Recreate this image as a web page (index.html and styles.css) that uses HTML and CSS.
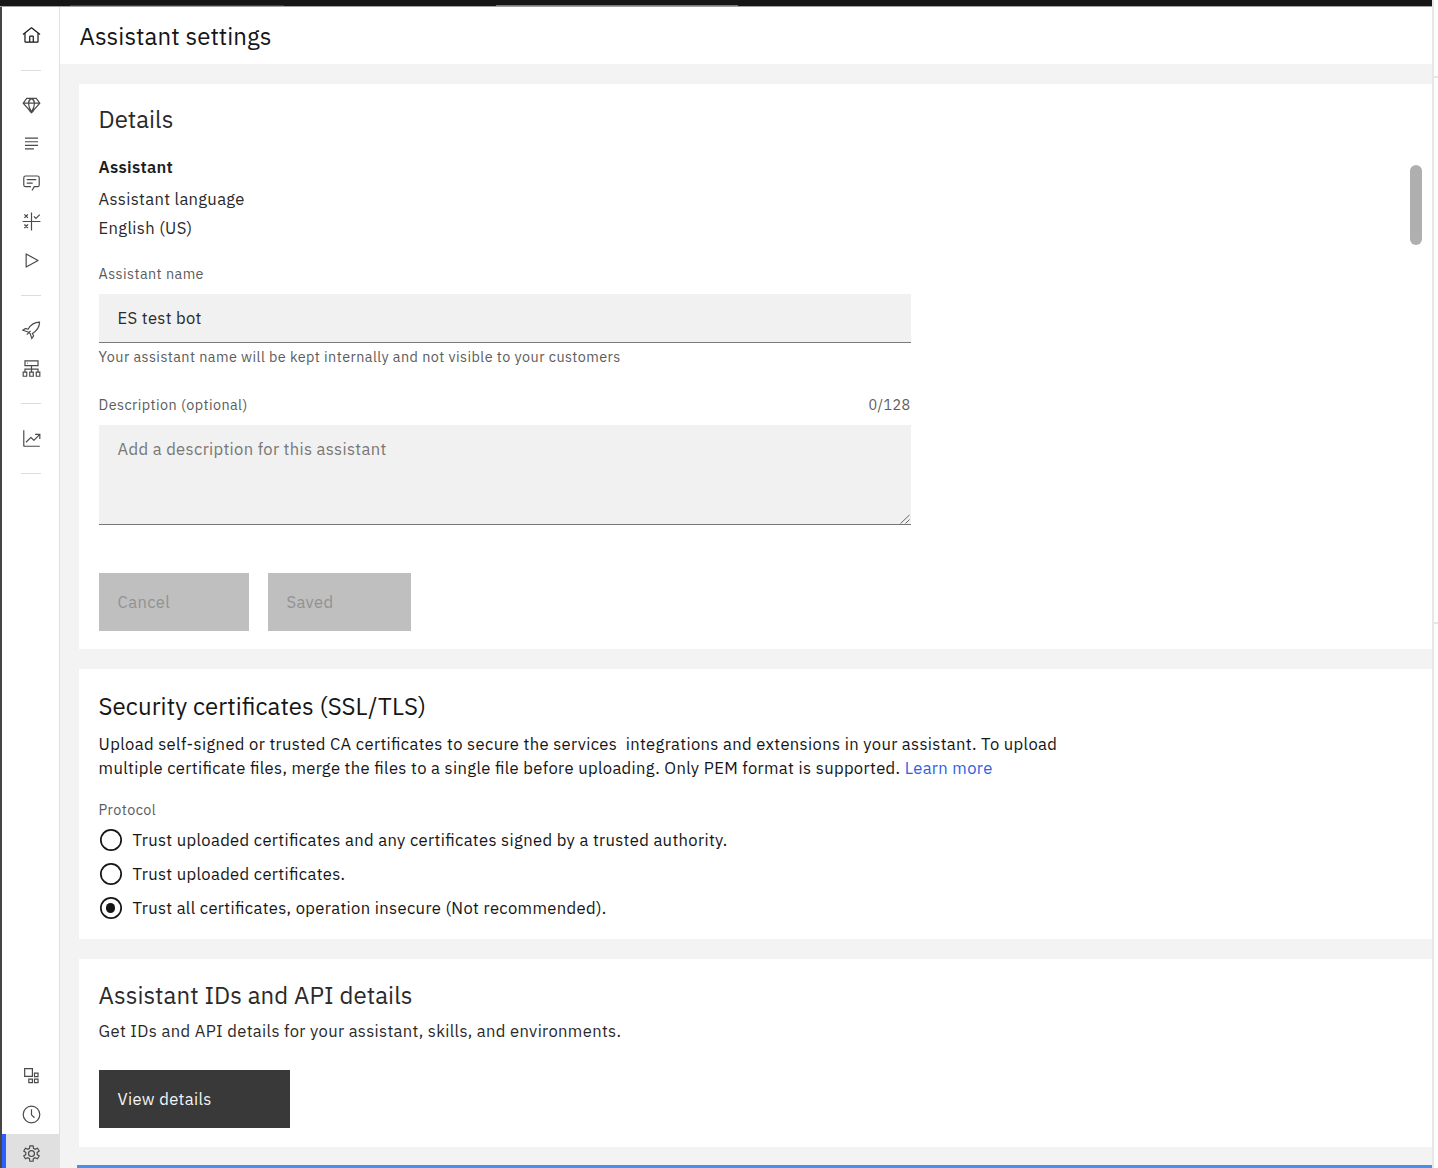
FILE: index.html
```html
<!DOCTYPE html>
<html lang="en">
<head>
<meta charset="utf-8">
<title>Assistant settings</title>
<link rel="stylesheet" href="styles.css">
</head>
<body>
<div class="window">
  <div class="topbar"><span class="tab tab-a"></span><span class="tab tab-b"></span></div>
  <div class="app">
    <nav class="sidebar">
      <a class="nav-item home"><svg viewBox="0 0 32 32"><path d="M16.6123,2.2138a1.01,1.01,0,0,0-1.2427,0L1,13.4194l1.2427,1.5717L4,13.6209V26a2.0041,2.0041,0,0,0,2,2H26a2.0037,2.0037,0,0,0,2-2V13.63L29.7573,15,31,13.4282ZM18,26H14V18h4Zm2,0V18a2.0023,2.0023,0,0,0-2-2H14a2.002,2.002,0,0,0-2,2v8H6V12.0615l10-7.79,10,7.8005V26Z"/></svg></a>
      <hr>
      <a class="nav-item"><svg class="line" viewBox="0 0 32 32"><path d="M8 4h16l6 8-14 16L2 12zM2 12h28M16 4c-4 2.500-5 5-5 8s2 10 5 15c3-5 5-12 5-15s-1-5.500-5-8"/><path d="M14 26h4l-2 2z"/></svg></a>
      <a class="nav-item"><svg viewBox="0 0 32 32"><path d="M5 6h22v2H5zM5 12h22v2H5zM5 18h22v2H5zM5 24h15v2H5z"/></svg></a>
      <a class="nav-item"><svg viewBox="0 0 32 32"><path d="M17.740 30L16 29l4-7h6a2 2 0 0 0 2-2V8a2 2 0 0 0-2-2H6a2 2 0 0 0-2 2v12a2 2 0 0 0 2 2h9v2H6a4 4 0 0 1-4-4V8a4 4 0 0 1 4-4h20a4 4 0 0 1 4 4v12a4 4 0 0 1-4 4h-4.840zM8 10h16v2H8zM8 16h10v2H8z"/></svg></a>
      <a class="nav-item"><svg class="line" viewBox="0 0 32 32"><path d="M16 1v30M1 16h30M4 4l6 6M10 4l-6 6M4 21l6 6M10 21l-6 6M20 7.500l3.500 3.500L30 4.500"/></svg></a>
      <a class="nav-item"><svg viewBox="0 0 32 32"><path d="M7,28a1,1,0,0,1-1-1V5a1,1,0,0,1,1.4819-.8763l20,11a1,1,0,0,1,0,1.7525l-20,11A1.0005,1.0005,0,0,1,7,28ZM8,6.6909V25.3088L24.9248,16Z"/></svg></a>
      <hr>
      <a class="nav-item"><svg class="line" viewBox="0 0 32 32"><path d="M10 14C15 6 20 2 29.500 2c0 9-4 14-12 19l2 4-3 4.500-3-9M10 14l-4-1.500-4.500 3 9 3M10 18.500l3 2M14.500 16.500L8 23"/></svg></a>
      <a class="nav-item"><svg class="line" viewBox="0 0 32 32"><path d="M5 3h22v8H5zM16 11v11M5 22v-5h22v5M2 22h6v7H2zM13 22h6v7h-6zM24 22h6v7h-6z"/><path d="M9 7h1"/></svg></a>
      <hr>
      <a class="nav-item"><svg viewBox="0 0 32 32"><path d="M4.670 28L4 27.330V2H2v26a2 2 0 0 0 2 2h26v-2zM22 8v2h5.590L20 17.590l-4.290-4.300a1 1 0 0 0-1.420 0L6 21.590 7.410 23 15 15.410l4.290 4.300a1 1 0 0 0 1.420 0L29 11.410V17h2V8z"/></svg></a>
      <hr>
      <span class="spacer"></span>
      <a class="nav-item"><svg class="line" viewBox="0 0 32 32"><path d="M4.500 4.500h13v13h-13zM21 12h6v6h-6zM21 22h6v6h-6zM11.500 22h6v6h-6z"/></svg></a>
      <a class="nav-item"><svg class="line" viewBox="0 0 32 32"><circle cx="16" cy="16" r="14"/><path d="M16 7v9.500l5 5"/></svg></a>
      <a class="nav-item active"><svg class="line" viewBox="0 0 32 32"><path d="M26 24.800l-4.200-1.700a9 9 0 0 1-2.700 1.600L18.700 29h-5.400l-.7-4.300a9 9 0 0 1-2.700-1.600L5.800 24.800 3 20.200l3.500-2.700a9 9 0 0 1 0-3L3 11.800l2.800-4.600 4.100 1.700a9 9 0 0 1 2.700-1.600L13.300 3h5.400l.7 4.300a9 9 0 0 1 2.700 1.600l4.100-1.700 2.800 4.600-3.500 2.700a9 9 0 0 1 0 3l3.500 2.700z"/><circle cx="16" cy="16" r="5"/></svg></a>
    </nav>
    <main class="main">
      <header class="page-header"><h1 class="title">Assistant settings</h1></header>
      <div class="cards">
        <section class="card details">
          <h2 class="details-title">Details</h2>
          <h3>Assistant</h3>
          <p class="lang-label">Assistant language</p>
          <p class="lang">English (US)</p>
          <label class="small name-label">Assistant name</label>
          <div class="input">ES test bot</div>
          <p class="small helper">Your assistant name will be kept internally and not visible to your customers</p>
          <div class="label-row small"><span class="desc-label">Description (optional)</span><span class="count">0/128</span></div>
          <div class="textarea"><span>Add a description for this assistant</span>
            <svg class="grip" viewBox="0 0 10 10"><path d="M.5 9.500l9-8.500M5.500 9.500l4-4"/></svg></div>
          <div class="buttons"><button class="btn cancel">Cancel</button><button class="btn saved">Saved</button></div>
          <span class="scroll-thumb"></span>
        </section>
        <section class="card security">
          <h2 class="security-title">Security certificates (SSL/TLS)</h2>
          <p class="copy">Upload self-signed or trusted CA certificates to secure the services&nbsp; integrations and extensions in your assistant. To upload<br>multiple certificate files, merge the files to a single file before uploading. Only PEM format is supported. <a>Learn more</a></p>
          <p class="small protocol">Protocol</p>
          <div class="option"><i class="radio"></i><span>Trust uploaded certificates and any certificates signed by a trusted authority.</span></div>
          <div class="option"><i class="radio"></i><span>Trust uploaded certificates.</span></div>
          <div class="option"><i class="radio checked"></i><span>Trust all certificates, operation insecure (Not recommended).</span></div>
        </section>
        <section class="card ids">
          <h2 class="ids-title">Assistant IDs and API details</h2>
          <p class="ids-copy">Get IDs and API details for your assistant, skills, and environments.</p>
          <button class="btn view">View details</button>
        </section>
        <div class="next-card"></div>
      </div>
    </main>
  </div>
</div>
<aside class="edge"><span></span><span></span></aside>
</body>
</html>
```
FILE: styles.css
```css
* { box-sizing: border-box; }
body {
  margin: 0; height: 1168px; display: flex; overflow: hidden; background: #fff;
  font-family: "IBM Plex Sans", Roboto, "Liberation Sans", sans-serif;
  font-feature-settings: "liga" 1;
  font-size: 16.6px; line-height: 24px; color: #161616;
}
h1, h2, h3, p { margin: 0; font-weight: 400; white-space: nowrap; }
.window { width: 1434px; height: 1168px; display: flex; flex-direction: column; border-right: 2px solid #e6e6e6; }
.topbar { height: 7px; display: flex; align-items: flex-end; background: #161616; border-bottom: 1px solid #a5a2a3; }
.tab { height: 1px; background: #3d3d3d; }
.tab-a { width: 214px; margin-left: 70px; }
.tab-b { width: 242px; margin-left: 212px; background: #777; }
.app { flex: 1; display: flex; border-left: 2px solid #454547; min-height: 0; }

.sidebar { width: 58px; display: flex; flex-direction: column; align-items: center; border-right: 1px solid #e0e0e0; padding-top: 9px; }
.nav-item { width: 100%; height: 38.8px; padding-left: 1px; flex: none; display: flex; align-items: center; justify-content: center; color: #4a4a4a; }
.nav-item.home { color: #161616; }
.nav-item svg { width: 19px; height: 19px; fill: currentColor; }
.nav-item svg.line { fill: none; stroke: currentColor; stroke-width: 2; }
.sidebar hr { width: 20px; height: 1px; border: 0; background: #dcdcdc; margin: 15px 0; flex: none; }
.spacer { flex: 1; }
.nav-item.active { height: 34px; background: #e0e0e0; border-left: 4px solid #2b62ff; padding: 4px 3px 0 0; }

.main { flex: 1; display: flex; flex-direction: column; background: #f3f3f3; }
.page-header { height: 57px; padding: 14px 19.5px; background: #fff; }
.title, h2 { font-size: 24px; line-height: 30px; }
.title { letter-spacing: .08px; }
.cards { flex: 1; display: flex; flex-direction: column; gap: 20px; padding: 20px 0 0 19px; }
.card { background: #fff; padding-left: 19.6px; display: flex; flex-direction: column; align-items: flex-start; flex: none; }

.details { height: 565px; padding-top: 20px; color: #2a2a2a; position: relative; }
h3 { font-size: 16.6px; font-weight: 600; margin-top: 21px; line-height: 24px; color: #1d1d1d; letter-spacing: .3px; }
.lang-label { margin-top: 7.500px; letter-spacing: .33px; }
.lang { margin-top: 5px; letter-spacing: .33px; }
.small { font-size: 14.400px; line-height: 20px; color: #5c5c5c; letter-spacing: .43px; }
.name-label { margin-top: 24.500px; }
.input { width: 812px; height: 49px; margin-top: 10px; padding: 12px 19px; background: #f1f1f1; border-bottom: 1px solid #7b7b7b; letter-spacing: .33px; }
.helper { margin-top: 4px; }
.label-row { width: 812px; margin-top: 28px; display: flex; justify-content: space-between; }
.textarea { width: 812px; height: 100px; margin-top: 10px; padding: 12px 19px; background: #f1f1f1; border-bottom: 1px solid #777; color: #777; letter-spacing: .33px; position: relative; }
.grip { position: absolute; right: 1px; bottom: 0; width: 10px; height: 10px; fill: none; stroke: #666; }
.buttons { display: flex; gap: 19px; margin-top: 48px; }
.btn { height: 58px; border: 0; padding: 0 19px; text-align: left; font: inherit; letter-spacing: .33px; }
.cancel { width: 150px; }
.saved { width: 143px; }
.cancel, .saved { background: #bfbfbf; color: #929292; }
.scroll-thumb { position: absolute; right: 10px; top: 81px; width: 12px; height: 80px; border-radius: 6px; background: #afafaf; }

.security { height: 270px; padding-top: 22px; }
.security h2, .ids h2 { letter-spacing: .07px; }
.copy { margin-top: 11px; letter-spacing: .35px; }
.copy a { color: #2f5fe0; }
.protocol { margin: 20px 0 3.500px; }
.option { height: 33.9px; display: flex; align-items: center; gap: 11px; white-space: nowrap; letter-spacing: .35px; padding-left: 1px; }
.radio { width: 22px; height: 22px; box-shadow: inset 0 0 0 1.700px #161616; border-radius: 50%; display: grid; place-items: center; }
.radio.checked::after { content: ""; width: 9.500px; height: 9.500px; border-radius: 50%; background: #161616; }

.ids { height: 188px; padding-top: 21px; color: #2a2a2a; }
.ids-copy { margin-top: 9px; letter-spacing: .34px; }
.view { width: 191px; margin-top: 27.400px; background: #393939; color: #f4f4f4; }
.next-card { height: 3px; margin: -2px 0 0 -2px; background: #4492ee; }

.edge { flex: 1; }
.edge span { display: block; height: 2px; background: #e6e6e6; margin-top: 76px; }
.edge span + span { margin-top: 544px; }
```
